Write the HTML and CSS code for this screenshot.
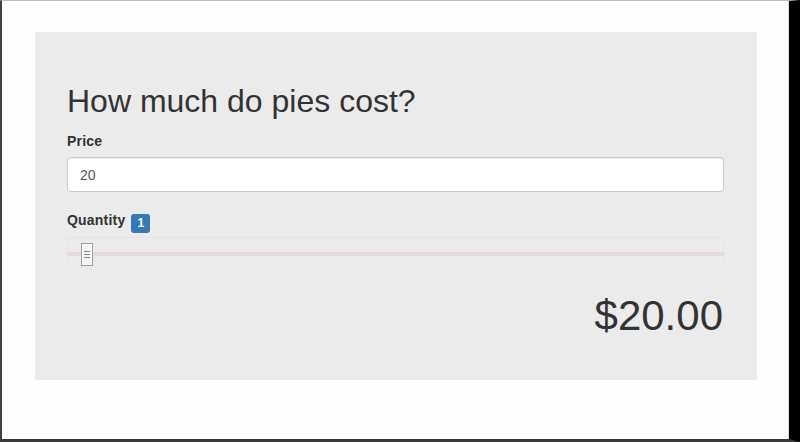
FILE: index.html
```html
<!DOCTYPE html>
<html>
<head>
<meta charset="utf-8">
<link rel="stylesheet" href="styles.css">
</head>
<body>
<div class="frame">
  <div class="screen">
    <div class="panel">
      <h1 class="title">How much do pies cost?</h1>
      <div class="group">
        <label class="label">Price</label>
        <div class="input">20</div>
      </div>
      <div class="group">
        <label class="label">Quantity <span class="badge">1</span></label>
        <div class="slider">
          <div class="track"></div>
          <div class="handle">
            <svg width="6" height="9" viewBox="0 0 6 9"><path d="M0 1.5H6M0 4.5H6M0 7.5H6" stroke="#8a8a8a" stroke-width="1"/></svg>
          </div>
        </div>
      </div>
      <div class="total">$20.00</div>
    </div>
  </div>
</div>
</body>
</html>
```
FILE: styles.css
```css
html, body {
  margin: 0;
  padding: 0;
  background: #ffffff;
}
.frame {
  width: 800px;
  height: 442px;
  box-sizing: border-box;
  border-top: 1px solid #bcbcbc;
  border-left: 2px solid #404040;
  border-bottom: 3px solid #3a3a3a;
  border-right: 11px solid #000000;
}
.screen {
  height: 100%;
  box-sizing: border-box;
  border-right: 1px solid #dadada;
  background: #fefefe;
  padding: 31px 0 0 33px;
}
.panel {
  width: 722px;
  height: 348px;
  box-sizing: border-box;
  background: #ebebeb;
  padding: 52px 33px 0 32px;
  font-family: "Liberation Sans", Arial, sans-serif;
  color: #333333;
}
.title {
  margin: 0 0 12px 0;
  font-size: 32px;
  font-weight: 400;
  line-height: 1.1;
}
.group {
  margin-bottom: 18px;
}
.label {
  display: block;
  font-size: 14px;
  font-weight: 700;
  line-height: 20px;
  margin-bottom: 6px;
  letter-spacing: 0.2px;
}
.badge {
  display: inline-block;
  vertical-align: -2px;
  margin-left: 2px;
  background: #337ab7;
  color: #ffffff;
  font-size: 12px;
  font-weight: 700;
  line-height: 13px;
  padding: 3px 6px;
  border-radius: 3px;
  letter-spacing: 0;
}
.input {
  height: 35px;
  box-sizing: border-box;
  border: 1px solid #cccccc;
  border-radius: 4px;
  background: #ffffff;
  box-shadow: inset 0 1px 1px rgba(0,0,0,0.075);
  padding: 0 12px;
  display: flex;
  align-items: center;
  font-size: 14px;
  color: #555555;
}
.group + .group {
  margin-bottom: 26px;
}
.group + .group .label {
  margin-bottom: 4px;
}
.slider {
  position: relative;
  height: 30px;
  box-sizing: border-box;
  border: 1px solid #e3e3e3;
  border-bottom: none;
  border-radius: 4px 4px 0 0;
  padding-top: 14px;
}
.track {
  height: 4px;
  background: #e5dad8;
  margin: 0 -1px;
}
.handle {
  position: absolute;
  left: 13px;
  top: 5px;
  width: 12px;
  height: 23px;
  box-sizing: border-box;
  border: 1px solid #9e9e9e;
  background: #f3f3f3;
  box-shadow: inset 0 0 0 1px #ffffff;
  display: flex;
  align-items: center;
  justify-content: center;
}
.total {
  text-align: right;
  font-size: 42px;
  line-height: 1.1;
  padding-right: 1px;
}
```
